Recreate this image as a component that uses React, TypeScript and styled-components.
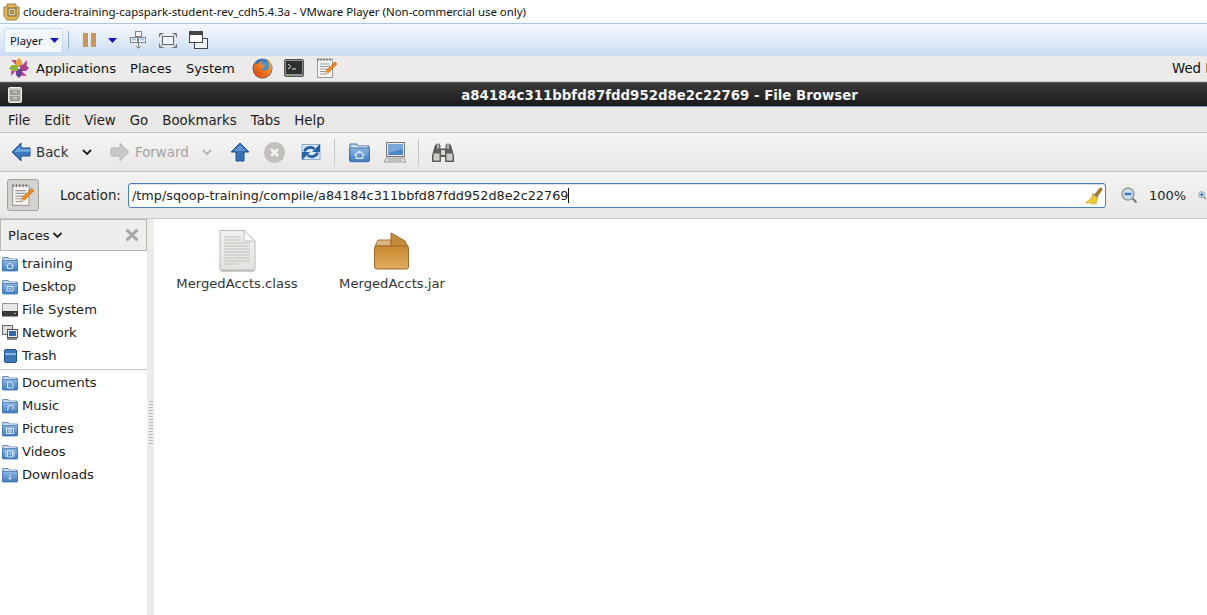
import React from "react";
import styled, { createGlobalStyle } from "styled-components";

const Global = createGlobalStyle`
  html, body { margin: 0; padding: 0; background: #fff; overflow: hidden; }
  #root { width: 1207px; height: 615px; }
`;

const gnome = `"DejaVu Sans", "Liberation Sans", sans-serif`;
const win = `"Noto Sans", "Open Sans", sans-serif`;

const Page = styled.div`
  width: 1207px; height: 615px; display: flex; flex-direction: column; overflow: hidden;
  background: #fff; font-family: ${gnome}; font-size: 13.33px; color: #2e3436;
`;
const WinTitle = styled.div`
  height: 23px; flex: none; display: flex; align-items: center; gap: 3px; padding-left: 3px;
  background: #fff; color: #111; font-family: ${win}; font-size: 11.44px; white-space: nowrap;
`;
const PlayerBar = styled.div`
  height: 33px; flex: none; box-sizing: border-box; display: flex; align-items: center;
  padding: 0 0 0 4px; border-top: 1px solid #a9c6e8;
  background: linear-gradient(#f6f9fd 0%, #e2ecf8 45%, #c9dcf2 100%);
`;
const PlayerMenu = styled.div`
  width: 59px; height: 25px; box-sizing: border-box; display: flex; align-items: center;
  justify-content: space-between; padding: 0 3px 0 5px; margin-top: 1px;
  border: 1px solid #c6daf3; border-radius: 2px; background: #f2f7fe;
  font-family: ${win}; font-size: 11.2px; color: #111;
`;
const PlayerSep = styled.div`width: 1px; height: 18px; background: #8fb0d4; margin: 0 14px 0 5px;`;
const PlayerIcon = styled.div<{ $gap: number }>`display: flex; margin-right: ${(p) => p.$gap}px;`;

const Panel = styled.div`
  height: 26px; flex: none; box-sizing: border-box; display: flex; align-items: center;
  padding: 0 0 1px 8px; background: #ecebe9; color: #111; font-size: 13.1px; white-space: nowrap;
  border-bottom: 1px solid #c8c7c5; overflow: hidden;
`;
const PanelMenu = styled.div<{ $w: number }>`width: ${(p) => p.$w}px; flex: none;`;
const PanelLauncher = styled.div<{ $w: number }>`width: ${(p) => p.$w}px; flex: none; display: flex;`;
const Clock = styled.div`margin-left: auto; width: 35px; flex: none; overflow: hidden; font-size: 13.33px;`;

const Caption = styled.div`
  height: 25px; flex: none; box-sizing: border-box; display: flex; align-items: center;
  background: linear-gradient(#3a3a3a 0, #2f2f2f 8px, #1f1f1f 20px, #1b1b1b 100%);
  border-bottom: 1px solid #6f93c0; border-top: 1px solid #5c5c5c;
  color: #f2f2f2; font-weight: 700; font-size: 13.33px; padding: 1px 0 0 8px;
`;
const CaptionText = styled.div`flex: 1; text-align: center; margin-left: 90px;`;

const MenuBar = styled.div`
  height: 26px; flex: none; box-sizing: border-box; display: flex; align-items: center; gap: 14px;
  padding: 1px 0 0 8px; background: #e9e8e6; border-bottom: 1px solid #c6c5c3; color: #222;
`;
const Tools = styled.div`
  height: 39px; flex: none; box-sizing: border-box; display: flex; align-items: center; padding-left: 11px;
  background: linear-gradient(#f5f5f4, #e8e7e5); border-bottom: 1px solid #c9c8c6;
`;
const ToolSlot = styled.div<{ $w: number; $dim?: boolean }>`
  width: ${(p) => p.$w}px; flex: none; display: flex; align-items: center; white-space: nowrap; gap: 5px;
  color: ${(p) => (p.$dim ? "#a3a3a1" : "#2e3436")};
`;
const ToolSep = styled.div<{ $w: number }>`
  width: ${(p) => p.$w}px; flex: none; height: 26px;
  background: linear-gradient(#c6c5c3, #c6c5c3) left center / 1px 26px no-repeat;
`;
const LocationBar = styled.div`
  height: 47px; flex: none; box-sizing: border-box; display: flex; align-items: center; padding-left: 7px;
  background: linear-gradient(#f3f3f2, #e9e8e6); border-bottom: 1px solid #c9c8c6; white-space: nowrap;
`;
const EditToggle = styled.div`
  width: 32px; height: 32px; box-sizing: border-box; flex: none; display: flex; align-items: center; justify-content: center;
  border: 1px solid #a3a29f; border-radius: 3px; background: #d5d3d0;
`;
const LocLabel = styled.div`width: 68px; flex: none; margin-left: 21px; color: #222;`;
const Entry = styled.div`
  width: 978px; height: 25px; flex: none; box-sizing: border-box; display: flex; align-items: center; position: relative;
  border: 1px solid #4a7fb8; border-radius: 3px; background: #fff; padding-left: 3px; color: #222; font-size: 12.8px;
  box-shadow: inset 0 1px 1px #d5e1ee;
`;
const Caret = styled.span`display: inline-block; width: 1px; height: 15px; background: #111;`;
const Clear = styled.div`position: absolute; right: 2px; top: 3px; display: flex;`;
const ZoomOut = styled.div`margin-left: 15px; display: flex; flex: none;`;
const ZoomLevel = styled.div`width: 49px; flex: none; margin-left: 11px; color: #222; font-size: 13px;`;

const Body = styled.div`flex: 1; display: flex; min-height: 0;`;
const Sidebar = styled.div`width: 147px; flex: none; display: flex; flex-direction: column; background: #fff;`;
const SideHead = styled.div`
  height: 32px; flex: none; box-sizing: border-box; display: flex; align-items: center; justify-content: space-between;
  padding: 0 7px 0 7px; background: #efeeec; border: 1px solid #b5b4b1; color: #222; font-size: 13.1px; margin-bottom: 1px;
`;
const PlacesLabel = styled.div`display: flex; align-items: center; gap: 2px;`;
const SideRow = styled.div`
  height: 23px; display: flex; align-items: center; gap: 4px; padding-left: 2px; color: #222; font-size: 13.1px;
`;
const SideRule = styled.div`height: 1px; margin: 2px 0 1px; background: #c6c5c3;`;
const Handle = styled.div`
  width: 7px; flex: none; display: flex; align-items: flex-start; justify-content: center;
  background: #edecea; padding-top: 181px; box-sizing: border-box;
`;
const Grip = styled.div`
  width: 4px; height: 45px;
  background: radial-gradient(circle, #b9b8b5 0.6px, transparent 0.7px) 0 0 / 2px 3px;
`;
const Files = styled.div`flex: 1; display: flex; gap: 33px; padding: 5px 0 0 22px; background: #fff; align-items: flex-start;`;
const FileItem = styled.div`width: 122px; display: flex; flex-direction: column; align-items: center; gap: 4px; color: #333; font-size: 13.15px;`;
const FileArt = styled.div`height: 48px; display: flex; align-items: flex-end;`;

const Tri = ({ c = "#1414c8" }: { c?: string }) => (
  <svg width="9" height="5" viewBox="0 0 9 5"><path d="M0 0h9L4.5 5z" fill={c} /></svg>
);
const Chevron = ({ c = "#222", w = 10 }: { c?: string; w?: number }) => (
  <svg width={w} height="7" viewBox="0 0 10 7"><path d="M1 1l4 4 4-4" fill="none" stroke={c} strokeWidth="1.8" /></svg>
);

const VmIcon = () => (
  <svg width="17" height="19" viewBox="0 0 17 19">
    <path d="M1 5h3V2h9v3h3v9l-3 4H4l-3-4z" fill="#ecb64f" stroke="#8c7a56" />
    <rect x="5" y="6" width="8" height="8" fill="#d3c9a6" stroke="#6f6242" />
    <rect x="7.5" y="8.5" width="3" height="3" fill="#c9962f" stroke="#6f6242" strokeWidth=".5" />
  </svg>
);
const Pause = () => (
  <svg width="14" height="14" viewBox="0 0 14 14"><path d="M0 0h5v14H0zM8 0h5v14H8z" fill="#d19350" /></svg>
);
const SendKeys = () => (
  <svg width="17" height="18" viewBox="0 0 17 18" fill="#f2f5f9" stroke="#848484">
    <rect x="5.5" y=".5" width="6" height="5" /><rect x=".5" y="6.5" width="7" height="5" /><rect x="8.5" y="6.5" width="7" height="5" />
    <path d="M8.5 12v5M6 15l2.5 2.5L11 15" fill="none" />
    <path d="M2 8.5h4M10 8.5h4" stroke="#9cc0e6" strokeWidth="2" />
  </svg>
);
const FullScreen = () => (
  <svg width="18" height="15" viewBox="0 0 18 15">
    <rect x="3.5" y="3.5" width="11" height="8" fill="#f2f5f9" stroke="#666" />
    <path d="M.5 4V.5h4M13.5.5h4v4M17.5 11v3.5h-4M4.5 14.5H.5v-4M.5.5l3 3M17.5.5l-3 3M17.5 14.5l-3-3M.5 14.5l3-3" fill="none" stroke="#777" />
  </svg>
);
const Unity = () => (
  <svg width="19" height="18" viewBox="0 0 19 18">
    <rect x="5.5" y="7.5" width="13" height="10" fill="#eef3f8" stroke="#444" />
    <rect x=".5" y=".5" width="13" height="11" fill="#fff" stroke="#444" />
    <rect x="1" y="1" width="12" height="3" fill="#444" />
  </svg>
);
const Flower = () => (
  <svg width="22" height="22" viewBox="0 0 22 22">
    <path d="M11 1l3 3v6h-6V4z" fill="#e8a33b" /><path d="M21 11l-3 3h-6V8h6z" fill="#a83f8c" />
    <path d="M11 21l-3-3v-6h6v6z" fill="#6a3f97" /><path d="M1 11l3-3h6v6H4z" fill="#8db33c" />
    <path d="M3 3h5v5zM19 3v5h-5zM19 19h-5v-5zM3 19v-5h5z" fill="#c0529c" />
  </svg>
);
const Firefox = () => (
  <svg width="21" height="21" viewBox="0 0 21 21">
    <defs>
      <radialGradient id="ffb" cx=".6" cy=".35" r=".6"><stop offset="0" stopColor="#5aa0dc" /><stop offset="1" stopColor="#1f4f96" /></radialGradient>
      <linearGradient id="ffo" x1="1" y1="0" x2="0" y2="1"><stop offset="0" stopColor="#f8c32c" /><stop offset=".5" stopColor="#ef7a1f" /><stop offset="1" stopColor="#c8321c" /></linearGradient>
    </defs>
    <circle cx="10.5" cy="10.5" r="10" fill="url(#ffb)" />
    <path d="M15 1c5 3 6 9 4 13-2 5-7 7-11 6-4-1-7-5-7-9 0-3 1-5 3-7 0 2 1 2 2 2 1-2 3-3 5-3-1 1-2 2-2 3 1 1 3 1 4 2 0 1-2 1-3 2 0 2 2 3 4 2 2-1 3-2 3-4 0-3-1-5-2-7z" fill="url(#ffo)" />
  </svg>
);
const Terminal = () => (
  <svg width="20" height="19" viewBox="0 0 20 19">
    <rect x=".5" y=".5" width="19" height="17" rx="1.5" fill="#8f918c" stroke="#555" />
    <rect x="2" y="2" width="16" height="13" fill="#2c302e" />
    <path d="M4 5l3 2.5L4 10M8 10h4" fill="none" stroke="#e8e8e8" />
    <rect x="3" y="16" width="2" height="1" fill="#8ae234" />
  </svg>
);
const Gedit = ({ s = 22 }: { s?: number }) => (
  <svg width={s} height={s} viewBox="0 0 22 22">
    <rect x="1.5" y="2.5" width="15" height="18" fill="#f7f6f2" stroke="#9a9a96" />
    <path d="M2 1v3M5 1v3M8 1v3M11 1v3M14 1v3" stroke="#777" />
    <path d="M4 7h10M4 9.5h10M4 12h8M4 14.5h7M4 17h6" stroke="#9a9a96" />
    <path d="M19 5l2 2-9 9-3 1 1-3z" fill="#ef8a1e" stroke="#b55c10" strokeWidth=".6" />
    <path d="M10 14l2 2-3 1z" fill="#f0d9b0" />
  </svg>
);
const FileCabinet = () => (
  <svg width="14" height="16" viewBox="0 0 14 16">
    <rect x=".5" y=".5" width="13" height="15" rx="1" fill="#c9c9c5" stroke="#eee" />
    <rect x="2" y="3" width="10" height="5" fill="#9b9b97" /><rect x="2" y="9" width="10" height="5" fill="#9b9b97" />
    <path d="M5 5h4M5 11h4" stroke="#e8e8e8" />
  </svg>
);
const ArrowBack = ({ dim }: { dim?: boolean }) => (
  <svg width="20" height="20" viewBox="0 0 20 20" style={{ transform: dim ? "scaleX(-1)" : undefined }}>
    <path d="M10 1L1 10l9 9v-5h9V6h-9z" fill={dim ? "#c9c8c6" : "#3d79bd"} stroke={dim ? "#b9b8b6" : "#1d4f8e"} />
    {!dim && <path d="M9 4L3 10h16V7H9z" fill="#6fa3dc" />}
  </svg>
);
const UpArrow = () => (
  <svg width="20" height="20" viewBox="0 0 20 20">
    <path d="M10 1l9 9h-5v9H6v-9H1z" fill="#3572b6" stroke="#1d4f8e" />
    <path d="M10 3l-6 6h12z" fill="#5f96d2" />
  </svg>
);
const Stop = () => (
  <svg width="21" height="21" viewBox="0 0 21 21">
    <circle cx="10.5" cy="10.5" r="10.5" fill="#c2bfbc" />
    <path d="M7 7l7 7M14 7l-7 7" stroke="#f4f3f1" strokeWidth="2.6" />
  </svg>
);
const Reload = () => (
  <svg width="20" height="20" viewBox="0 0 20 20">
    <rect x="1" y="2.5" width="18" height="15" fill="#dbe7f4" stroke="#6f9bd0" strokeWidth=".8" />
    <path d="M3.5 9.5C4.5 5.500 10 4 13.5 7" fill="none" stroke="#2460a6" strokeWidth="2.8" />
    <path d="M19 2v8h-8z" fill="#2460a6" />
    <path d="M16.500 10.500c-1 4-6.500 5.500-10 2.500" fill="none" stroke="#2460a6" strokeWidth="2.8" />
    <path d="M1 18v-8h8z" fill="#2460a6" />
  </svg>
);
const Folder = ({ s = 16, emblem }: { s?: number; emblem?: React.ReactNode }) => (
  <svg width={s} height={s} viewBox="0 0 16 16">
    <defs>
      <linearGradient id="fold" x1="0" y1="0" x2="0" y2="1"><stop offset="0" stopColor="#8db6e2" /><stop offset="1" stopColor="#3f7cc0" /></linearGradient>
    </defs>
    <path d="M.7 14V1.5h5.500l1 1.500h8v11z" fill="#bcd2ea" stroke="#3d6fa8" strokeWidth=".7" />
    <path d="M2 3.5h12v2H2z" fill="#f2f5f8" />
    <rect x=".5" y="4.5" width="15" height="10.500" rx=".8" fill="url(#fold)" stroke="#2f67a6" strokeWidth=".7" />
    <g fill="none" stroke="#e0ecf8" strokeWidth=".9">{emblem}</g>
  </svg>
);
const Computer = () => (
  <svg width="22" height="21" viewBox="0 0 22 21">
    <rect x="2.5" y=".5" width="18" height="14" fill="#e8e8e6" stroke="#777" />
    <rect x="4" y="2" width="15" height="11" fill="#4f86c6" />
    <path d="M4 2h15v5L4 11z" fill="#7aa6da" />
    <path d="M2 16h18l2 4H0z" fill="#e4e3e0" stroke="#888" strokeWidth=".8" />
    <path d="M4 18h14" stroke="#999" />
  </svg>
);
const Binoculars = () => (
  <svg width="22" height="19" viewBox="0 0 22 19">
    <path d="M3.5 2h4.500v4h6V2h4.500L22 14v4.500h-8.500v-5h-5v5H0V14z" fill="#5e605b" stroke="#3a3c38" strokeWidth=".7" />
    <path d="M4.5 1h3v5h-3zM14.5 1h3v5h-3z" fill="#b4b6b1" stroke="#555" strokeWidth=".6" />
    <rect x="1.5" y="10.5" width="6" height="7" fill="#c9cbc6" /><rect x="14.5" y="10.5" width="6" height="7" fill="#c9cbc6" />
    <rect x="9" y="7" width="4" height="5" fill="#d2d4cf" />
  </svg>
);
const Broom = () => (
  <svg width="17" height="18" viewBox="0 0 17 18">
    <path d="M14.5.5l2 1.500-5 7.500-3-2z" fill="#a8722f" stroke="#7d5420" strokeWidth=".4" />
    <path d="M7 6.5l5 3.500-1 3-1 4.500-1.500-1.500L7 17.500 6 16l-1.500 1L3.500 15.500 1 16.500 0 15c3-1 5.500-4 7-8.500z" fill="#ecc92e" stroke="#b0922a" strokeWidth=".5" />
    <path d="M6.800 7l5 3.500" stroke="#8a7ab0" />
  </svg>
);
const Magnifier = ({ plus }: { plus?: boolean }) => (
  <svg width="17" height="17" viewBox="0 0 17 17">
    <circle cx="7" cy="7" r="6" fill="#cddff2" stroke="#9b9b98" strokeWidth="1.4" />
    <path d="M3.5 7h7" stroke="#3d79bd" strokeWidth="2.4" />
    {plus && <path d="M7 3.5v7" stroke="#3d79bd" strokeWidth="2.4" />}
    <path d="M11.5 11.5l4 4" stroke="#777" strokeWidth="2" />
  </svg>
);
const CloseX = () => (
  <svg width="14" height="14" viewBox="0 0 13 13"><path d="M1.5 1.5l10 10M11.5 1.5l-10 10" stroke="#a8a8a6" strokeWidth="2.8" /></svg>
);
const Drive = () => (
  <svg width="16" height="16" viewBox="0 0 16 16">
    <rect x=".5" y="1.5" width="15" height="8" fill="#e6e6e4" stroke="#999" />
    <rect x=".5" y="9.5" width="15" height="4.500" fill="#3a3a38" stroke="#333" />
    <rect x="12" y="11" width="2" height="1" fill="#bbb" />
  </svg>
);
const Network = () => (
  <svg width="16" height="16" viewBox="0 0 16 16">
    <rect x=".5" y=".5" width="10" height="9" fill="#ddd" stroke="#666" />
    <rect x="5.5" y="4.5" width="10" height="8" fill="#eee" stroke="#555" />
    <rect x="7" y="6" width="7" height="5" fill="#2f6bb0" />
    <path d="M5 14h10" stroke="#888" strokeWidth="2" />
  </svg>
);
const Trash = () => (
  <svg width="16" height="16" viewBox="0 0 16 16">
    <rect x="2.5" y="1.5" width="12" height="13" rx="1.500" fill="#3f78ba" stroke="#1f4f8c" />
    <path d="M3 6h11" stroke="#cfe0f3" strokeWidth="1.2" />
  </svg>
);
const DocFile = () => (
  <svg width="37" height="43" viewBox="0 0 37 43">
    <defs><linearGradient id="dg" x1="0" y1="0" x2="0" y2="1"><stop offset="0" stopColor="#f1f1ef" /><stop offset="1" stopColor="#e2e2df" /></linearGradient></defs>
    <path d="M1 41V1.5h24L36 12v29z" fill="url(#dg)" stroke="#b9b9b6" />
    <path d="M25 1.5V12h11z" fill="#fafaf9" stroke="#bfbfbc" />
    <path d="M5 8h17M5 11h17M5 14h26M5 17h26M5 20h26M5 23h26M5 26h26M5 29h26M5 32h26M5 35h14" stroke="#bdbdba" />
    <path d="M2 42h33" stroke="#999" />
  </svg>
);
const Jar = () => (
  <svg width="36" height="40" viewBox="0 0 36 40">
    <defs><linearGradient id="jg" x1="0" y1="0" x2="0" y2="1"><stop offset="0" stopColor="#c98a2f" /><stop offset="1" stopColor="#e0ab5e" /></linearGradient></defs>
    <path d="M1 14l3-6h13v6z" fill="#d9b57f" stroke="#a8763a" />
    <path d="M17 1l14 8 3 6H17z" fill="#c48a38" stroke="#9a6a28" />
    <rect x=".5" y="14" width="34" height="23" rx="2" fill="url(#jg)" stroke="#9a6a28" />
  </svg>
);

const emblems: Record<string, React.ReactNode> = {
  training: <path d="M4 10l4-3 4 3M5.5 9.5v3h5v-3" />,
  desktop: <path d="M5 7.5h6v4.500H5zM7 9.5h2" />,
  documents: <path d="M5.5 7h3.500l2 2v4H5.5z" />,
  music: <path d="M6 12V8l5-1v4M6 12h-1M11 11h-1" />,
  pictures: <g><rect x="4.5" y="7.5" width="7" height="5" /><circle cx="8" cy="10" r="1.4" /></g>,
  videos: <path d="M5.5 7h5v6h-5zM4 7v6M12 7v6M7 10h2" />,
  downloads: <path d="M8 7.5v4.500M6 10.500L8 12.500l2-2" />,
};

const placesA = [
  { n: "training", i: <Folder emblem={emblems.training} /> },
  { n: "Desktop", i: <Folder emblem={emblems.desktop} /> },
  { n: "File System", i: <Drive /> },
  { n: "Network", i: <Network /> },
  { n: "Trash", i: <Trash /> },
];
const placesB = [
  { n: "Documents", i: <Folder emblem={emblems.documents} /> },
  { n: "Music", i: <Folder emblem={emblems.music} /> },
  { n: "Pictures", i: <Folder emblem={emblems.pictures} /> },
  { n: "Videos", i: <Folder emblem={emblems.videos} /> },
  { n: "Downloads", i: <Folder emblem={emblems.downloads} /> },
];

export default function App() {
  return (
    <Page>
      <Global />
      <WinTitle>
        <VmIcon />
        <span>cloudera-training-capspark-student-rev_cdh5.4.3a - VMware Player (Non-commercial use only)</span>
      </WinTitle>
      <PlayerBar>
        <PlayerMenu>Player <Tri /></PlayerMenu>
        <PlayerSep />
        <PlayerIcon $gap={11}><Pause /></PlayerIcon>
        <PlayerIcon $gap={13}><Tri /></PlayerIcon>
        <PlayerIcon $gap={12}><SendKeys /></PlayerIcon>
        <PlayerIcon $gap={12}><FullScreen /></PlayerIcon>
        <PlayerIcon $gap={0}><Unity /></PlayerIcon>
      </PlayerBar>
      <Panel>
        <PanelLauncher $w={28}><Flower /></PanelLauncher>
        <PanelMenu $w={94}>Applications</PanelMenu>
        <PanelMenu $w={56}>Places</PanelMenu>
        <PanelMenu $w={66}>System</PanelMenu>
        <PanelLauncher $w={32}><Firefox /></PanelLauncher>
        <PanelLauncher $w={32}><Terminal /></PanelLauncher>
        <PanelLauncher $w={24}><Gedit /></PanelLauncher>
        <Clock>Wed Feb 10</Clock>
      </Panel>
      <Caption>
        <FileCabinet />
        <CaptionText>a84184c311bbfd87fdd952d8e2c22769 - File Browser</CaptionText>
      </Caption>
      <MenuBar>
        {["File", "Edit", "View", "Go", "Bookmarks", "Tabs", "Help"].map((m) => <span key={m}>{m}</span>)}
      </MenuBar>
      <Tools>
        <ToolSlot $w={71}><ArrowBack /><span>Back</span></ToolSlot>
        <ToolSlot $w={28}><Chevron /></ToolSlot>
        <ToolSlot $w={92} $dim><ArrowBack dim /><span>Forward</span></ToolSlot>
        <ToolSlot $w={28}><Chevron c="#b5b4b2" /></ToolSlot>
        <ToolSlot $w={34}><UpArrow /></ToolSlot>
        <ToolSlot $w={37}><Stop /></ToolSlot>
        <ToolSlot $w={33}><Reload /></ToolSlot>
        <ToolSep $w={15} />
        <ToolSlot $w={35}><Folder s={21} emblem={emblems.training} /></ToolSlot>
        <ToolSlot $w={34}><Computer /></ToolSlot>
        <ToolSep $w={14} />
        <ToolSlot $w={24}><Binoculars /></ToolSlot>
      </Tools>
      <LocationBar>
        <EditToggle><Gedit s={24} /></EditToggle>
        <LocLabel>Location:</LocLabel>
        <Entry>
          /tmp/sqoop-training/compile/a84184c311bbfd87fdd952d8e2c22769<Caret />
          <Clear><Broom /></Clear>
        </Entry>
        <ZoomOut><Magnifier /></ZoomOut>
        <ZoomLevel>100%</ZoomLevel>
        <Magnifier plus />
      </LocationBar>
      <Body>
        <Sidebar>
          <SideHead>
            <PlacesLabel>Places<Chevron w={11} /></PlacesLabel>
            <CloseX />
          </SideHead>
          {placesA.map((p) => <SideRow key={p.n}>{p.i}{p.n}</SideRow>)}
          <SideRule />
          {placesB.map((p) => <SideRow key={p.n}>{p.i}{p.n}</SideRow>)}
        </Sidebar>
        <Handle><Grip /></Handle>
        <Files>
          <FileItem><FileArt><DocFile /></FileArt>MergedAccts.class</FileItem>
          <FileItem><FileArt><Jar /></FileArt>MergedAccts.jar</FileItem>
        </Files>
      </Body>
    </Page>
  );
}
